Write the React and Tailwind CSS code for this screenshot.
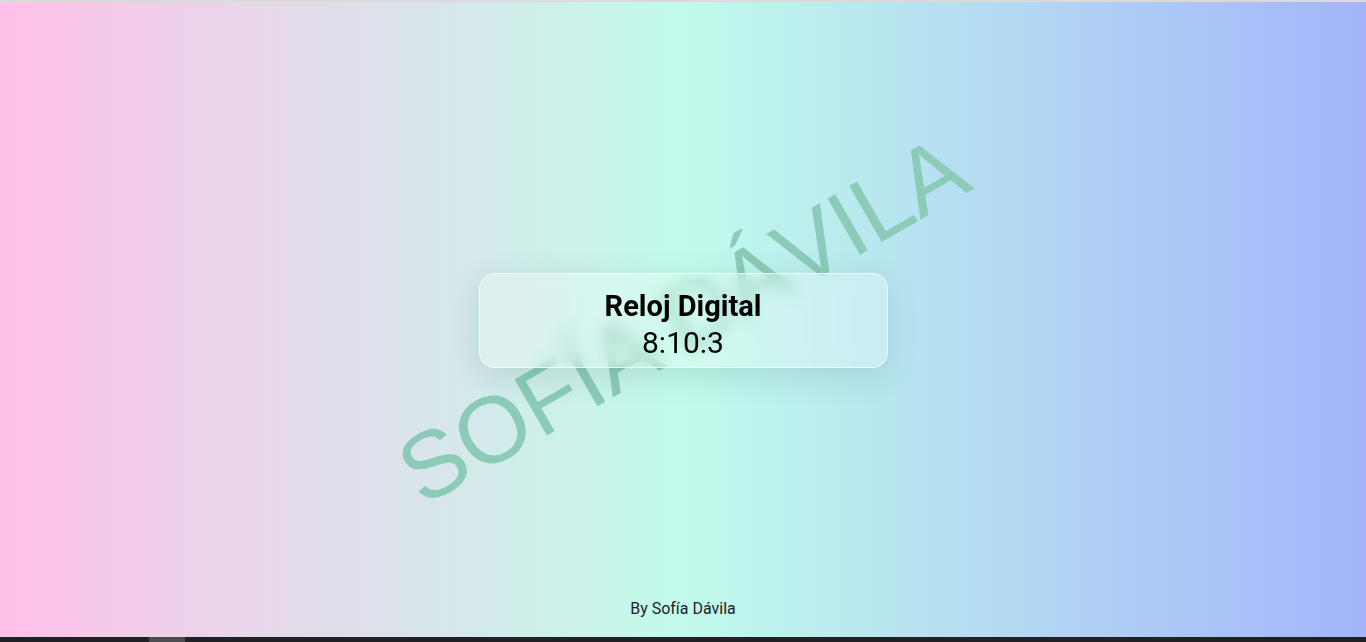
import React from "react";

export default function App() {
  return (
    <div className="w-[1366px] h-[642px] flex flex-col overflow-hidden" style={{ fontFamily: "Roboto, 'Noto Sans', sans-serif" }}>
      <div className="h-[2px] bg-[#dadada] shrink-0" />
      <div className="relative h-[635px] grid grid-rows-[1fr_auto_1fr] bg-[linear-gradient(to_right,#ffc1e9,#c1fbeb_50%,#a4b4fb)]">
        <div className="absolute inset-0 flex items-center justify-center pointer-events-none">
          <span
            className="block rotate-[-30deg] text-[94px] leading-none whitespace-nowrap text-[#8bcbb8]"
            style={{ fontFamily: "'Liberation Sans', Arial, sans-serif" }}
          >
            SOFÍA DÁVILA
          </span>
        </div>
        <div />
        <div className="relative flex justify-center mt-[2px]">
          <div className="w-[409px] h-[95px] rounded-[16px] border border-white/70 bg-white/25 backdrop-blur-[8px] shadow-[0_8px_32px_rgba(40,70,80,0.14)] flex flex-col items-center pt-[15px]">
            <h1 className="text-[29px] leading-[34px] font-bold text-black">Reloj Digital</h1>
            <p className="text-[30px] leading-[36px] mt-[2px] text-black">8:10:3</p>
          </div>
        </div>
        <div className="flex items-end justify-center pb-[18px]">
          <p className="relative text-[16px] leading-[20px] text-[#222]">By Sofía Dávila</p>
        </div>
      </div>
      <div className="h-[5px] bg-[#202124] shrink-0 flex">
        <div className="ml-[149px] w-[36px] h-full bg-[#4b4c50]" />
      </div>
    </div>
  );
}
